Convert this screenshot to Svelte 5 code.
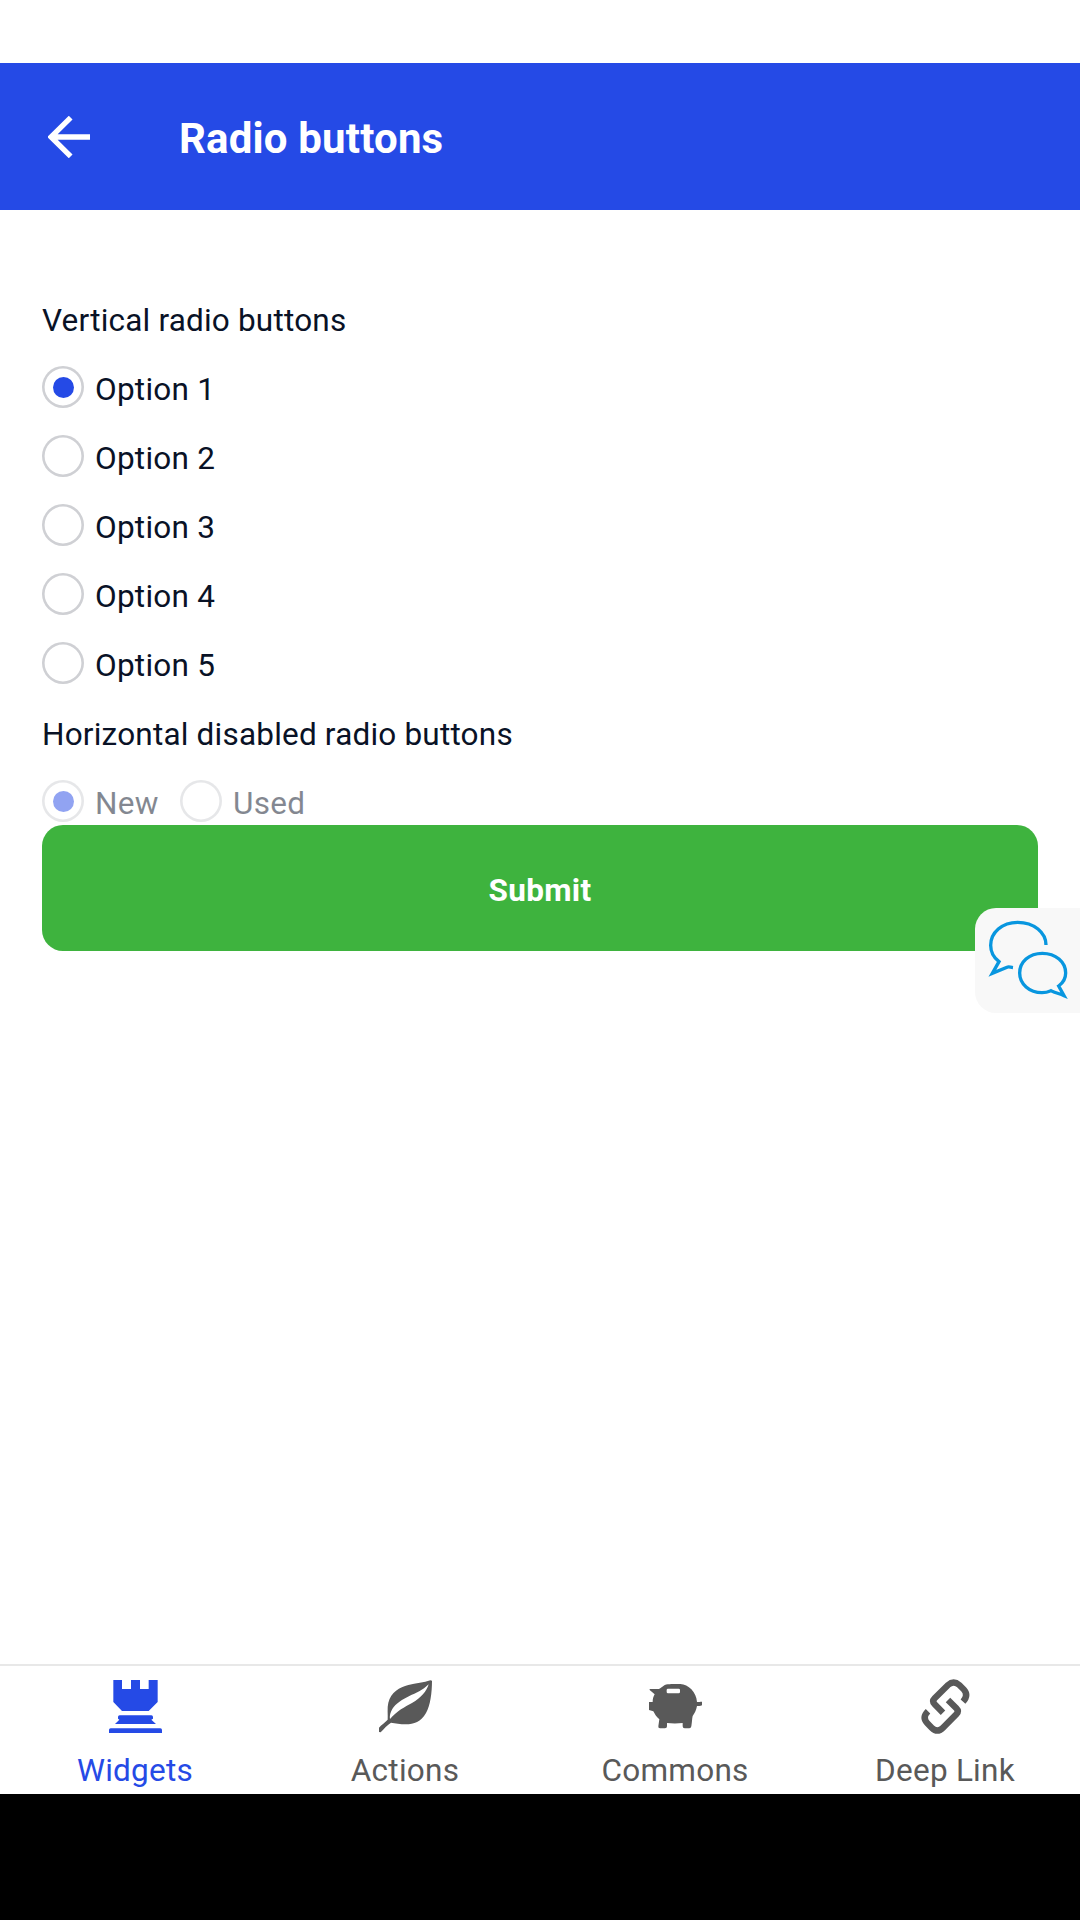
<script>
  const options = ['Option 1', 'Option 2', 'Option 3', 'Option 4', 'Option 5'];
  const conditions = ['New', 'Used'];
  const tabs = ['Widgets', 'Actions', 'Commons', 'Deep Link'];
  let selected = $state('Option 1');
  let activeTab = $state('Widgets');
</script>

{#snippet radio(label, checked, disabled, onselect)}
  <button class="radio" role="radio" aria-checked={checked} {disabled} onclick={onselect}>
    <span class="ring">{#if checked}<span class="dot"></span>{/if}</span>
    <span class="label">{label}</span>
  </button>
{/snippet}

{#snippet tabIcon(name)}
  <svg class="tab-icon" viewBox="0 0 159 159" aria-hidden="true">
    {#if name === 'Widgets'}
      <path d="M13 0H39V27H66V0H93V27H119V0H146V66L119 93H39L13 66ZM32 106H127Q132 106 132 111V116L127 119L141 132H18L31 119L27 116V111Q27 106 32 106ZM5 145H154Q159 145 159 150V159H0V150Q0 145 5 145Z" />
    {:else if name === 'Actions'}
      <path fill-rule="evenodd" d="M159 2C159 38 154 76 141 99C126 126 105 133 80 133C64 133 49 130 36 128C25 135 15 146 5 157L0 156V143C8 133 18 128 26 119C27 104 24 83 28 68C36 36 62 22 88 15C111 9 135 8 154 1ZM149 13C131 31 111 39 91 48C61 62 30 84 33 117C56 91 76 82 99 69C127 53 142 35 149 13Z" />
    {:else if name === 'Commons'}
      <path fill-rule="evenodd" d="M2 27H29C34 27 39 20 46 16C53 12 60 13 67 12H94C118 13 142 36 144 66H151L155 65H159V76C154 79 148 77 144 78C142 90 137 99 131 108C129 117 129 128 127 139Q126 145 121 145H107Q101 145 101 139V129C86 131 69 131 54 129V139Q54 145 48 145H33Q27 145 28 139L31 118C23 111 18 104 13 94L0 90V66H11C11 57 13 50 17 43L2 30ZM57 26Q53 26 53 30V36Q53 40 57 40H89Q93 40 93 36V30Q93 26 89 26Z" />
    {:else}
      <path class="link" d="M72 98L47 73Q38 64 47 55L87 15Q104 0 121 15L134 28Q150 45 132 65" />
      <path class="link" d="M87 60L112 85Q121 94 112 103L72 143Q55 160 38 143L25 130Q8 113 27 94" />
    {/if}
  </svg>
{/snippet}

<div class="screen">
  <header>
    <button class="back" aria-label="Back">
      <svg viewBox="0 0 126 126" aria-hidden="true"><path d="M68 5L9 63L68 121M14 63H126" /></svg>
    </button>
    <h1>Radio buttons</h1>
  </header>

  <main>
    <p>Vertical radio buttons</p>
    <div class="vertical" role="radiogroup" aria-label="Vertical radio buttons">
      {#each options as option}
        {@render radio(option, selected === option, false, () => (selected = option))}
      {/each}
    </div>
    <p>Horizontal disabled radio buttons</p>
    <div class="horizontal" role="radiogroup" aria-label="Horizontal disabled radio buttons">
      {#each conditions as condition}
        {@render radio(condition, condition === 'New', true, () => {})}
      {/each}
    </div>
    <button class="submit"><span>Submit</span></button>
  </main>

  <nav>
    {#each tabs as tab}
      <button class="tab" class:active={activeTab === tab} onclick={() => (activeTab = tab)}>
        {@render tabIcon(tab)}
        <span>{tab}</span>
      </button>
    {/each}
  </nav>
  <div class="system-bar"></div>

  <button class="chat" aria-label="Chat">
    <svg viewBox="0 1 315 315" aria-hidden="true">
      <path d="M213 112C213 75 177 44 128 44C81 44 47 75 47 113C47 134 56 150 72 162L52 197L96 179C101 176 105 179 114 180" />
      <path d="M228 249C247 257 253 258 267 264L251 235C265 225 272 211 272 196C272 163 242 137 202 137C162 137 134 163 134 196C134 229 163 255 201 255C212 255 221 252 228 249Z" />
    </svg>
  </button>
</div>

<style>
  :global(body) {
    margin: 0;
    background: #fff;
  }
  .screen {
    position: relative;
    display: flex;
    flex-direction: column;
    box-sizing: border-box;
    width: 1080px;
    height: 1920px;
    padding-top: 63px;
    overflow: hidden;
    background: #fff;
    color: #091226;
    font: 31.5px/37px Roboto, sans-serif;
    letter-spacing: 0.2px;
  }
  button {
    margin: 0;
    padding: 0;
    border: 0;
    background: none;
    color: inherit;
    font: inherit;
    letter-spacing: inherit;
  }
  svg {
    display: block;
  }
  header {
    display: flex;
    align-items: center;
    flex: none;
    box-sizing: border-box;
    height: 147px;
    padding-left: 48px;
    background: #254ae6;
    color: #fff;
  }
  .back {
    width: 42px;
    height: 42px;
  }
  .back svg {
    width: 42px;
    height: 42px;
    fill: none;
    stroke: #fff;
    stroke-width: 16;
  }
  h1 {
    margin: 4px 0 0 89px;
    font-size: 42px;
    line-height: 50px;
    font-weight: 700;
    letter-spacing: 0.17px;
  }
  main {
    display: flex;
    flex: 1;
    flex-direction: column;
    padding: 92px 42px 0;
  }
  p {
    margin: 0;
    padding-bottom: 32px;
  }
  .vertical {
    display: flex;
    flex-direction: column;
    align-items: flex-start;
    gap: 27px;
    margin-top: -5px;
    padding-bottom: 32px;
  }
  .horizontal {
    display: flex;
    gap: 21.4px;
    margin-top: -5px;
  }
  .radio {
    display: flex;
    gap: 11px;
    height: 42px;
    letter-spacing: 0.25px;
  }
  .radio:disabled {
    opacity: 0.5;
  }
  .ring {
    display: grid;
    place-items: center;
    width: 42px;
    height: 42px;
    border-radius: 50%;
    box-shadow: inset 0 0 0 2.6px #cfd0d4;
  }
  .dot {
    width: 21px;
    height: 21px;
    border-radius: 50%;
    background: #254ae6;
  }
  .label {
    padding-top: 5px;
  }
  .submit {
    flex: none;
    height: 126px;
    margin-top: 3px;
    padding-top: 4px;
    border-radius: 21px;
    background: #3eb33e;
    color: #fff;
    font-weight: 700;
    letter-spacing: 0.3px;
  }
  nav {
    display: grid;
    grid-template-columns: repeat(4, 1fr);
    flex: none;
    box-sizing: border-box;
    height: 130px;
    border-top: 2px solid #e8e8e8;
  }
  .tab {
    display: flex;
    flex-direction: column;
    align-items: center;
    gap: 19px;
    padding-top: 14px;
    color: #595959;
    letter-spacing: 0.25px;
  }
  .tab.active {
    color: #254ae6;
  }
  .tab-icon {
    width: 53px;
    height: 53px;
    overflow: visible;
    fill: currentColor;
  }
  .link {
    fill: none;
    stroke: currentColor;
    stroke-width: 19;
  }
  .system-bar {
    flex: none;
    height: 126px;
    background: #000;
  }
  .chat {
    position: absolute;
    top: 908px;
    right: 0;
    width: 105px;
    height: 105px;
    border-radius: 21px 0 0 21px;
    background: #f8f8f8;
  }
  .chat svg {
    width: 105px;
    height: 105px;
    fill: none;
    stroke: #0896df;
    stroke-width: 10;
  }
</style>
